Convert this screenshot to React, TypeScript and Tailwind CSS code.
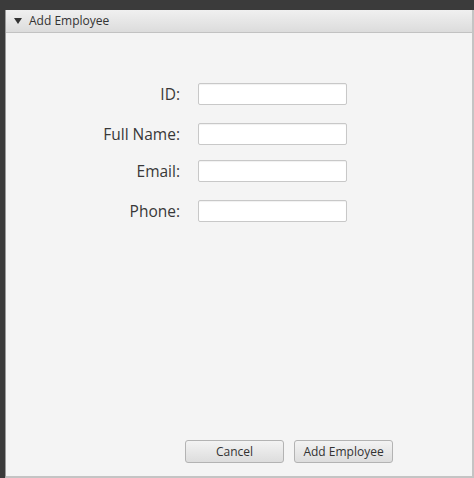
const FIELDS = [
  { label: "ID:", mt: "mt-[50px]" },
  { label: "Full Name:", mt: "mt-[18px]" },
  { label: "Email:", mt: "mt-[15px]" },
  { label: "Phone:", mt: "mt-[18px]" },
];

const FONT = "font-['Segoe_UI','Open_Sans','Noto_Sans',sans-serif]";

export default function App() {
  return (
    <div className={`w-[474px] h-[478px] bg-[#3b3b3b] pt-[10px] pl-[5px] flex ${FONT}`}>
      <div className="flex-1 flex flex-col border-l border-[#9a9a9a] border-r-2 border-r-[#c4c4c4] border-b-2 border-b-[#c4c4c4] bg-[#f4f4f4]">
        {/* Title bar */}
        <div className="h-[23px] flex items-center pl-[8px] bg-gradient-to-b from-[#f0f0f0] to-[#dcdcdc] border-b border-[#c2c2c2]">
          <svg width="8" height="6" viewBox="0 0 8 6" className="mr-[7px]">
            <path d="M0 0 L8 0 L4 6 Z" fill="#333" />
          </svg>
          <span className="text-[12px] text-[#333] leading-none">Add Employee</span>
        </div>

        {/* Form */}
        <div className="flex flex-col">
          {FIELDS.map((f) => (
            <div key={f.label} className={`flex items-center h-[22px] ${f.mt}`}>
              <label className="w-[174px] text-right text-[15.5px] leading-[22px] text-[#383838]">
                {f.label}
              </label>
              <input
                type="text"
                className="ml-[18px] w-[149px] h-[22px] bg-white border border-[#c8c8c8] rounded-[2px] shadow-[inset_0_1px_1px_rgba(0,0,0,0.06)] outline-none"
              />
            </div>
          ))}
        </div>

        <div className="flex-1" />

        {/* Buttons */}
        <div className="flex gap-[10px] pl-[179px] pb-[13px]">
          <button className="w-[99px] h-[23px] rounded-[3px] border border-[#b3b3b3] bg-gradient-to-b from-[#f3f3f3] to-[#dddddd] text-[12px] text-[#333]">
            Cancel
          </button>
          <button className="w-[99px] h-[23px] rounded-[3px] border border-[#b3b3b3] bg-gradient-to-b from-[#f3f3f3] to-[#dddddd] text-[12px] text-[#333]">
            Add Employee
          </button>
        </div>
      </div>
    </div>
  );
}
